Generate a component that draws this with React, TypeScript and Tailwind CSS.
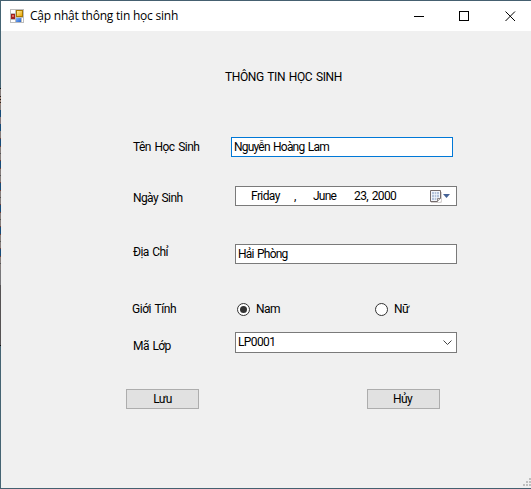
import type { ReactNode } from 'react';

const ui = "font-['Roboto','Liberation_Sans',sans-serif] text-[12px] leading-[20px] tracking-[-0.6px] [word-spacing:1.2px] whitespace-pre text-black";

function Row({ className, label, labelClass, children }: { className: string; label: string; labelClass: string; children: ReactNode }) {
  return (
    <div className={`flex items-start ${className}`}>
      <label className={`shrink-0 ${labelClass}`}>{label}</label>
      {children}
    </div>
  );
}

function AppIcon() {
  return (
    <svg width="14" height="14" viewBox="0 0 14 14" shapeRendering="crispEdges" className="shrink-0">
      <defs>
        <linearGradient id="gold" x1="0" y1="0" x2="1" y2="1"><stop stopColor="#fff0a0" /><stop offset="1" stopColor="#eaa400" /></linearGradient>
        <linearGradient id="blue" x1="0" y1="0" x2="1" y2="1"><stop stopColor="#82b4ff" /><stop offset="1" stopColor="#2966cb" /></linearGradient>
      </defs>
      <rect width="14" height="14" fill="#bdbdbd" />
      <rect x="1" y="1" width="4" height="3" fill="#fff" />
      <rect x="1" y="11" width="4" height="2" fill="#fff" />
      <rect x="12" y="9" width="1" height="4" fill="#fff" />
      <rect x="1" y="5" width="4" height="5" fill="#9e2020" />
      <rect x="2" y="6" width="2" height="2" fill="#e46a5c" />
      <rect x="6" y="1" width="7" height="7" fill="#a87800" />
      <rect x="7" y="2" width="5" height="5" fill="url(#gold)" />
      <rect x="6" y="9" width="5" height="4" fill="url(#blue)" />
    </svg>
  );
}

function Calendar() {
  return (
    <svg width="12" height="13" viewBox="0 0 12 13">
      <path d="M1 12h9l1-1V2h1v10l-1 1H1z" fill="#d5d1d0" />
      <path d="M.5.5h10v8l-3 3h-7z" fill="#f4f6fb" stroke="#746b6b" />
      <path d="M2 2h7v6H7v2H2z" fill="#b4c2da" />
      <path d="M4.500 2v8M6.500 2v8M2 4.500h7M2 7.500h7" stroke="#f4f6fb" strokeWidth=".7" />
      <path d="M7.500 11.500v-3h3" fill="#ddd" stroke="#8c8585" />
    </svg>
  );
}

function Radio({ checked }: { checked?: boolean }) {
  return (
    <span className="flex size-[13px] items-center justify-center rounded-full border border-[#333] bg-white">
      {checked && <span className="size-[7px] rounded-full bg-[#333]" />}
    </span>
  );
}

/* Slice of the desktop visible through the one pixel frame. */
function Edge() {
  return (
    <div className="flex w-px shrink-0 flex-col bg-[#456473]">
      <div className="mt-[87px] h-px bg-[#181c20]" />
      <div className="h-[7px] bg-[#857d7b]" />
      <div className="h-[9px] bg-[repeating-linear-gradient(#29211f_0_1px,#9a8072_1px_3px)]" />
      <div className="h-[5px] bg-[#857d7b]" />
      <div className="h-[7px] bg-[#164b78]" />
      <div className="h-[7px] bg-[#85777b]" />
      <div className="h-[7px] bg-[#164b78]" />
      <div className="h-[7px] bg-[#857d7b]" />
      {[0, 1, 2, 3, 4, 5].map((n) => (
        <div key={n} className="flex h-[22px] flex-col bg-[#857d7b]">
          <div className="h-[9px] border-y border-[#733e36] bg-[#164b78]" />
          <div className="mt-[6px] h-px bg-[#555]" />
        </div>
      ))}
      <div className="h-[15px] bg-[#77777a]" />
      <div className="h-[60px] bg-[#555253]" />
      <div className="h-px bg-[#111]" />
    </div>
  );
}

export default function App() {
  return (
    <div className="flex h-[489px] w-[531px] flex-col overflow-hidden border-y border-[#456070] bg-[#f0f0f0]">
      <div className="flex min-h-0 flex-1">
        <Edge />
        <main className="flex min-w-0 flex-1 flex-col">
          <header className="flex h-[30px] shrink-0 items-center bg-white pl-[9px]">
            <AppIcon />
            <h1 className="ml-[6px] font-['Open_Sans','Noto_Sans',sans-serif] text-[12px] leading-[18px] tracking-[-0.22px] whitespace-nowrap text-black">Cập nhật thông tin học sinh</h1>
            <svg className="mr-[15px] ml-auto shrink-0" width="102" height="11" viewBox="0 0 102 11" fill="none" stroke="#000">
              <path d="M0 5.500h10M45.500 .5h9v9h-9z" shapeRendering="crispEdges" />
              <path d="m91.500 .5 9.500 9.500m0-9.500-9.500 9.500" />
            </svg>
          </header>

          <form className={`flex flex-1 flex-col ${ui}`}>
            <h2 className="mt-[36px] h-[20px] pl-[224px] tracking-[-0.4px]">THÔNG TIN HỌC SINH</h2>

            <Row className="mt-[50px] h-[20px] pl-[132px]" label="Tên Học Sinh" labelClass="w-[98px] tracking-[-0.55px]">
              <div className="h-[20px] w-[222px] border border-[#0078d7] bg-white pl-[2px] leading-[19px] tracking-[-0.8px]">Nguyễn Hoàng Lam</div>
            </Row>

            <Row className="mt-[29px] h-[20px] pl-[132px]" label="Ngày Sinh" labelClass="w-[102px] pt-[2px]">
              <div className="flex h-[20px] w-[222px] border border-[#7a7a7a] bg-white pl-[15px] leading-[18px]">
                <span className="w-[43px]">Friday</span>
                <span className="w-[19px]">,</span>
                <span className="w-[41px] tracking-[-0.8px]">June</span>
                <span>23, 2000</span>
                <span className="mr-[6px] ml-auto flex items-center gap-[1px]">
                  <Calendar />
                  <svg width="7" height="4" viewBox="0 0 7 4"><path d="M0 0h7L3.500 4z" fill="#456296" /></svg>
                </span>
              </div>
            </Row>

            <Row className="mt-[38px] h-[20px] pl-[132px]" label="Địa Chỉ" labelClass="w-[102px] mt-[-2px]">
              <div className="h-[20px] w-[222px] border border-[#7a7a7a] bg-white pl-[2px] leading-[19px] tracking-[-0.78px]">Hải Phòng</div>
            </Row>

            <Row className="mt-[34px] h-[20px] pl-[131px]" label="Giới Tính" labelClass="w-[105px] pt-[1px] tracking-[-0.45px]">
              <div className="flex w-[138px] items-center gap-[6px] pt-[1px]"><Radio checked />Nam</div>
              <div className="flex items-center gap-[6px] pt-[1px]"><Radio />Nữ</div>
            </Row>

            <Row className="mt-[14px] h-[21px] pl-[132px]" label="Mã Lớp" labelClass="w-[102px] pt-[4px]">
              <div className="flex h-[21px] w-[222px] items-center justify-between border border-[#7a7a7a] bg-white pr-[4px] pl-[2px] leading-[19px]">
                <span>LP0001</span>
                <svg width="9" height="6" viewBox="0 0 9 6" fill="none" stroke="#444"><path d="m.5.5 4 4 4-4" /></svg>
              </div>
            </Row>

            <div className="mt-[36px] flex gap-[168px] pl-[125px]">
              <button type="button" className="h-[20px] w-[73px] border border-[#adadad] bg-[#e1e1e1] leading-[18px] tracking-[-0.55px]">Lưu</button>
              <button type="button" className="h-[20px] w-[73px] border border-[#adadad] bg-[#e1e1e1] pr-[2px] leading-[18px] tracking-[-0.55px]">Hủy</button>
            </div>

            <svg className="mt-auto mb-[2px] ml-auto shrink-0" width="8" height="8" viewBox="0 0 8 8" fill="#bfbfbf" shapeRendering="crispEdges">
              <path d="M6 0h2v2H6zM3 3h2v2H3zM6 3h2v2H6zM0 6h2v2H0zM3 6h2v2H3zM6 6h2v2H6z" />
            </svg>
          </form>
        </main>
      </div>
    </div>
  );
}
